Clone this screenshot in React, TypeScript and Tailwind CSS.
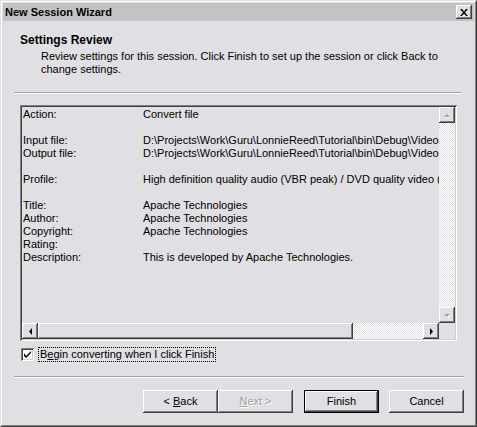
import React from "react";

const raised =
  "shadow-[inset_-1px_-1px_#404040,inset_1px_1px_#ffffff,inset_-2px_-2px_#808080,inset_2px_2px_#e0dfe3]";
const checker =
  "bg-[repeating-conic-gradient(#ffffff_0_25%,#e0dfe3_0_50%)] bg-[length:2px_2px]";

const rows: [string, string][] = [
  ["Action:", "Convert file"],
  ["", ""],
  ["Input file:", String.raw`D:\Projects\Work\Guru\LonnieReed\Tutorial\bin\Debug\Videos\sample.wmv`],
  ["Output file:", String.raw`D:\Projects\Work\Guru\LonnieReed\Tutorial\bin\Debug\Videos\sample_out.wmv`],
  ["", ""],
  ["Profile:", "High definition quality audio (VBR peak) / DVD quality video (VBR peak)"],
  ["", ""],
  ["Title:", "Apache Technologies"],
  ["Author:", "Apache Technologies"],
  ["Copyright:", "Apache Technologies"],
  ["Rating:", ""],
  ["Description:", "This is developed by Apache Technologies."],
];

function Arrow({ dir, disabled }: { dir: "up" | "down" | "left" | "right"; disabled?: boolean }) {
  const pts = {
    up: "4,1 7,4 1,4",
    down: "1,1 7,1 4,4",
    left: "4,0 4,7 1,3.5",
    right: "1,0 1,7 4,3.5",
  }[dir];
  const horiz = dir === "left" || dir === "right";
  return (
    <svg width={horiz ? 5 : 8} height={horiz ? 7 : 5} viewBox={horiz ? "0 0 5 7" : "0 0 8 5"}>
      {disabled && <polygon points={pts} fill="#ffffff" transform="translate(1,1)" />}
      <polygon points={pts} fill={disabled ? "#a0a0a0" : "#000000"} />
    </svg>
  );
}

function ScrollBtn({ dir, disabled }: { dir: "up" | "down" | "left" | "right"; disabled?: boolean }) {
  return (
    <div className={`w-[16px] h-[16px] shrink-0 bg-[#e0dfe3] flex items-center justify-center ${raised}`}>
      <Arrow dir={dir} disabled={disabled} />
    </div>
  );
}

function Button({
  children,
  isDefault,
  className = "",
}: {
  children: React.ReactNode;
  isDefault?: boolean;
  className?: string;
}) {
  return (
    <div
      className={`h-[23px] flex items-center justify-center bg-[#e0dfe3] ${
        isDefault ? "border border-black" : ""
      } ${className}`}
    >
      <div className={`w-full h-full flex items-center justify-center ${raised}`}>{children}</div>
    </div>
  );
}

export default function App() {
  return (
    <div
      className="w-[477px] h-[427px] bg-[#e0dfe3] text-black text-[11px] leading-[13px] flex flex-col border-t border-l border-t-[#e0dfe3] border-l-[#e0dfe3] border-r border-b border-r-[#404040] border-b-[#404040] overflow-hidden"
      style={{ fontFamily: '"Liberation Sans", Arial, sans-serif' }}
    >
      <div className="flex-1 flex flex-col border-t border-l border-white border-r border-b border-r-[#808080] border-b-[#808080] p-px">
        {/* title bar */}
        <div className="h-[18px] bg-[#c3c3c3] flex items-center justify-between pl-[2px] pr-[2px]">
          <span className="font-bold text-[11px] text-black">New Session Wizard</span>
          <div className={`w-[16px] h-[14px] bg-[#e0dfe3] flex items-center justify-center ${raised}`}>
            <svg width="8" height="7" viewBox="0 0 8 7">
              <path d="M0 0h2l2 2.5L6 0h2L5 3.5 8 7H6L4 4.5 2 7H0l3-3.5z" fill="#000" />
            </svg>
          </div>
        </div>

        {/* header */}
        <div className="pl-[17px] pt-[12px]">
          <div className="font-bold text-[12px] leading-[14px]">Settings Review</div>
          <div className="pl-[21px] pt-[3px] pr-[8px]">
            Review settings for this session. Click Finish to set up the session or click Back to change settings.
          </div>
        </div>

        <div className="mt-[16px] ml-[11px] w-[447px] border-t border-t-[#a0a0a0] border-b border-b-white" />

        {/* list box */}
        <div
          className="mt-[11px] ml-[17px] w-[437px] h-[236px] p-[2px] flex shadow-[inset_1px_1px_#808080,inset_-1px_-1px_#ffffff,inset_2px_2px_#404040,inset_-2px_-2px_#d4d0c8]"
        >
          <div className="flex-1 flex flex-col min-w-0">
            <div className="flex-1 overflow-hidden pt-[1px] pl-[1px]">
              {rows.map(([label, value], i) => (
                <div key={i} className="flex h-[13px] whitespace-nowrap">
                  <span className="w-[120px] shrink-0">{label}</span>
                  <span>{value}</span>
                </div>
              ))}
            </div>
            <div className="h-[16px] flex">
              <ScrollBtn dir="left" />
              <div className={`w-[315px] h-[16px] bg-[#e0dfe3] ${raised}`} />
              <div className={`flex-1 ${checker}`} />
              <ScrollBtn dir="right" />
            </div>
          </div>
          <div className="w-[16px] flex flex-col">
            <ScrollBtn dir="up" disabled />
            <div className={`flex-1 ${checker}`} />
            <ScrollBtn dir="down" disabled />
            <div className="h-[16px]" />
          </div>
        </div>

        {/* checkbox */}
        <div className="mt-[6px] ml-[18px] flex items-center gap-[4px]">
          <div className="w-[13px] h-[13px] bg-white flex items-center justify-center shadow-[inset_1px_1px_#808080,inset_-1px_-1px_#ffffff,inset_2px_2px_#404040,inset_-2px_-2px_#d4d0c8]">
            <svg width="7" height="7" viewBox="0 0 7 7">
              <path d="M0 2v3l2 2L7 2V0L2 5z" fill="#000" />
            </svg>
          </div>
          <div className="border border-dotted border-black px-[1px] h-[15px] flex items-center">
            <span>
              B<span className="underline">e</span>gin converting when I click Finish
            </span>
          </div>
        </div>

        <div className="mt-[14px] ml-[11px] w-[450px] border-t border-t-[#a0a0a0] border-b border-b-white" />

        {/* buttons */}
        <div className="mt-[12px] flex justify-end pr-[10px]">
          <Button className="w-[75px]">
            <span>
              &lt; <span className="underline">B</span>ack
            </span>
          </Button>
          <Button className="w-[75px]">
            <span className="text-[#a0a0a0] [text-shadow:1px_1px_#ffffff]">
              <span className="underline">N</span>ext &gt;
            </span>
          </Button>
          <Button isDefault className="w-[75px] ml-[11px]">
            Finish
          </Button>
          <Button className="w-[75px] ml-[10px]">Cancel</Button>
        </div>
      </div>
    </div>
  );
}
